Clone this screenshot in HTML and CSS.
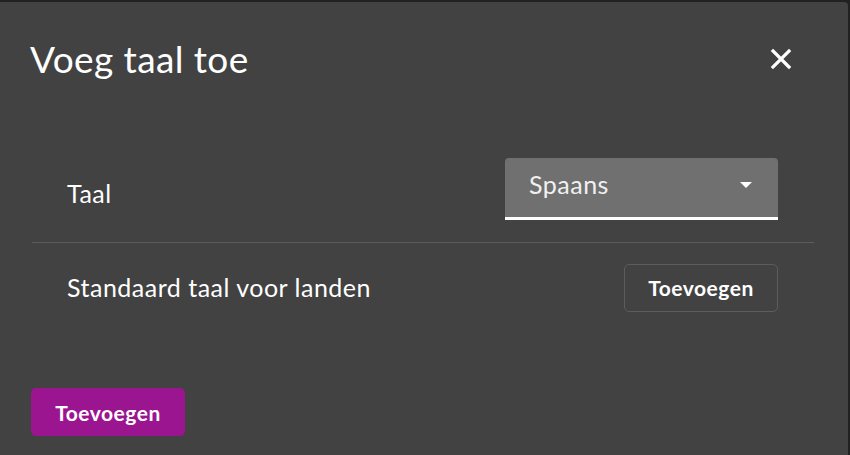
FILE: index.html
```html
<!DOCTYPE html>
<html lang="nl">
<head>
<meta charset="utf-8">
<link rel="stylesheet" href="styles.css">
</head>
<body>
<div class="dialog">
  <div class="header">
    <h1 class="title">Voeg taal toe</h1>
    <button class="close" aria-label="Sluiten">
      <svg width="22" height="22" viewBox="0 0 22 22"><path d="M3 3 L19 19 M19 3 L3 19" stroke="#fff" stroke-width="3.2" stroke-linecap="square"/></svg>
    </button>
  </div>
  <div class="content">
    <div class="row row-first">
      <span class="label">Taal</span>
      <div class="select">
        <span class="select-value">Spaans</span>
        <span class="arrow"></span>
      </div>
    </div>
    <div class="row row-second">
      <span class="label">Standaard taal voor landen</span>
      <button class="btn-outline">Toevoegen</button>
    </div>
  </div>
  <div class="actions">
    <button class="btn-primary">Toevoegen</button>
  </div>
</div>
</body>
</html>
```

FILE: styles.css
```css
html, body {
  margin: 0;
  padding: 0;
  height: 100%;
  background: #212121;
  overflow: hidden;
}
body {
  font-family: "Lato", "Noto Sans", sans-serif;
  color: #fff;
}
.dialog {
  background: #424242;
  margin: 2px 2px 0 0;
  height: 460px;
  border-top-right-radius: 4px;
  box-sizing: border-box;
  padding: 0 34px 0 32px;
}
.header {
  display: flex;
  align-items: center;
  justify-content: space-between;
  height: 114px;
}
.title {
  margin: 0;
  margin-left: -2px;
  font-weight: 400;
  font-size: 37px;
  letter-spacing: 0.4px;
  line-height: 1;
  margin-top: -2px;
}
.close {
  background: none;
  border: 0;
  padding: 0;
  width: 22px;
  height: 22px;
  margin-right: 22px;
  margin-top: -1px;
  display: flex;
}
.content {
  padding-top: 42px;
}
.row {
  display: flex;
  align-items: center;
  justify-content: space-between;
  padding: 0 36px 0 35px;
}
.row-first {
  height: 84px;
  align-items: flex-start;
  border-bottom: 1px solid #5c5c5c;
}
.row-first .label {
  margin-top: 20px;
}
.label {
  font-size: 25px;
  letter-spacing: 0.5px;
}
.select {
  width: 273px;
  height: 62px;
  background: #707070;
  border-radius: 4px 4px 0 0;
  border-bottom: 3px solid #fff;
  display: flex;
  align-items: center;
  justify-content: space-between;
  padding: 0 26px 0 24px;
  box-sizing: border-box;
}
.select-value {
  font-size: 25px;
  letter-spacing: 0.5px;
  color: #f0f0f0;
  margin-top: -7px;
}
.arrow {
  width: 0;
  height: 0;
  border-left: 6px solid transparent;
  border-right: 6px solid transparent;
  border-top: 6px solid #fff;
  margin-top: -6px;
}
.row-second {
  height: 89px;
}
.row-second .label {
  margin-top: -2px;
}
.btn-outline, .btn-primary {
  font-family: "Lato", "Noto Sans", sans-serif;
  font-weight: 700;
  font-size: 21px;
  letter-spacing: 0.5px;
  color: #fff;
  border-radius: 5px;
  padding: 0;
  cursor: pointer;
}
.btn-outline {
  background: transparent;
  border: 1px solid #5c5c5c;
  width: 154px;
  height: 48px;
}
.actions {
  padding-top: 56px;
  margin-left: -1px;
}
.btn-primary {
  background: #9b1590;
  border: 0;
  width: 154px;
  height: 48px;
}
```
